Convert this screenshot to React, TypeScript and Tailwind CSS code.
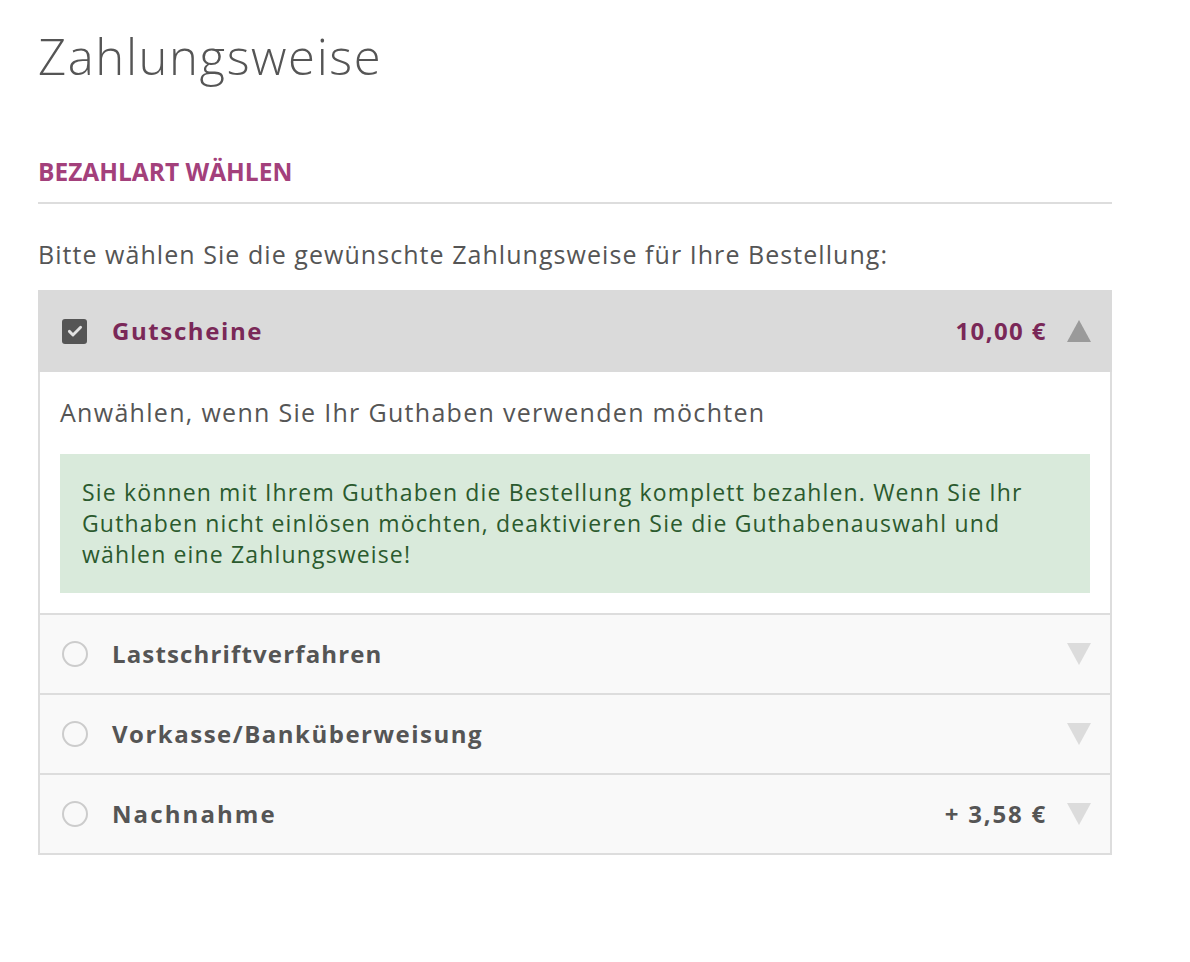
import React from "react";

type Method = {
  id: string;
  label: string;
  track: string;
  price?: string;
};

const methods: Method[] = [
  { id: "debit", label: "Lastschriftverfahren", track: "tracking-[1.15px]" },
  { id: "prepay", label: "Vorkasse/Banküberweisung", track: "tracking-[1.5px]" },
  { id: "cod", label: "Nachnahme", track: "tracking-[2.1px]", price: "+ 3,58 €" },
];

const TriangleUp = () => (
  <svg width="24" height="22" viewBox="0 0 24 22" className="shrink-0">
    <polygon points="12,0 24,22 0,22" fill="#9a9a9a" />
  </svg>
);

const TriangleDown = () => (
  <svg width="24" height="22" viewBox="0 0 24 22" className="shrink-0">
    <polygon points="0,0 24,0 12,22" fill="#dcdcdc" />
  </svg>
);

const CheckBox = () => (
  <span className="flex h-[25px] w-[25px] shrink-0 items-center justify-center rounded-[3px] bg-[#555555]">
    <svg width="18" height="18" viewBox="0 0 24 24">
      <path d="M4.5 12.5l4.8 4.8L19.5 7" fill="none" stroke="#e2e2e2" strokeWidth="3.8" strokeLinecap="round" strokeLinejoin="round" />
    </svg>
  </span>
);

const Radio = () => (
  <span className="h-[26px] w-[26px] shrink-0 rounded-full border-2 border-[#cccccc] bg-[#f9f9f9]" />
);

export default function App() {
  return (
    <div className="min-h-[962px] bg-white font-['Open_Sans',sans-serif] text-[#555555]">
      <div className="box-content w-[1074px] pl-[38px] pt-[22px]">
        <h1 className="text-[49px] font-light leading-[68px] tracking-[1.6px] text-[#555555]">Zahlungsweise</h1>

        <h2 className="mt-[66px] text-[24.5px] font-bold leading-[32px] text-[#a3407b]">BEZAHLART WÄHLEN</h2>
        <div className="mt-[14px] h-[2px] bg-[#dddddd]" />

        <p className="mt-[33px] text-[25px] leading-[34px] tracking-[1.05px]">
          Bitte wählen Sie die gewünschte Zahlungsweise für Ihre Bestellung:
        </p>

        <div className="mt-[19px]">
          <div className="flex h-[82px] items-center bg-[#dadada] pl-[24px] pr-[21px]">
            <CheckBox />
            <span className="ml-[25px] text-[24px] font-bold tracking-[1.6px] text-[#7a2858]">Gutscheine</span>
            <span className="ml-auto mr-[20px] text-[24px] font-bold tracking-[1.4px] text-[#7a2858]">10,00 €</span>
            <TriangleUp />
          </div>
          <div className="border-x-2 border-b-2 border-[#dddddd]">
            <div className="bg-white px-[20px] pb-[20px] pt-[24px]">
              <p className="text-[25px] leading-[32px] tracking-[1.3px]">
                Anwählen, wenn Sie Ihr Guthaben verwenden möchten
              </p>
              <div className="mt-[26px] bg-[#d9eadb] px-[22px] py-[23px] text-[23px] leading-[31px] tracking-[1.15px] text-[#2b5a2e]">
                Sie können mit Ihrem Guthaben die Bestellung komplett bezahlen. Wenn Sie Ihr
                <br />
                Guthaben nicht einlösen möchten, deaktivieren Sie die Guthabenauswahl und
                <br />
                wählen eine Zahlungsweise!
              </div>
            </div>
            {methods.map((m) => (
              <div
                key={m.id}
                className="flex h-[80px] items-center border-t-2 border-[#dddddd] bg-[#f9f9f9] pl-[22px] pr-[19px]"
              >
                <Radio />
                <span className={`ml-[24px] text-[24px] font-bold text-[#555555] ${m.track}`}>{m.label}</span>
                {m.price && (
                  <span className="ml-auto mr-[20px] text-[24px] font-bold tracking-[1.8px] text-[#555555]">
                    {m.price}
                  </span>
                )}
                <span className={m.price ? "" : "ml-auto"}>
                  <TriangleDown />
                </span>
              </div>
            ))}
          </div>
        </div>
      </div>
    </div>
  );
}
